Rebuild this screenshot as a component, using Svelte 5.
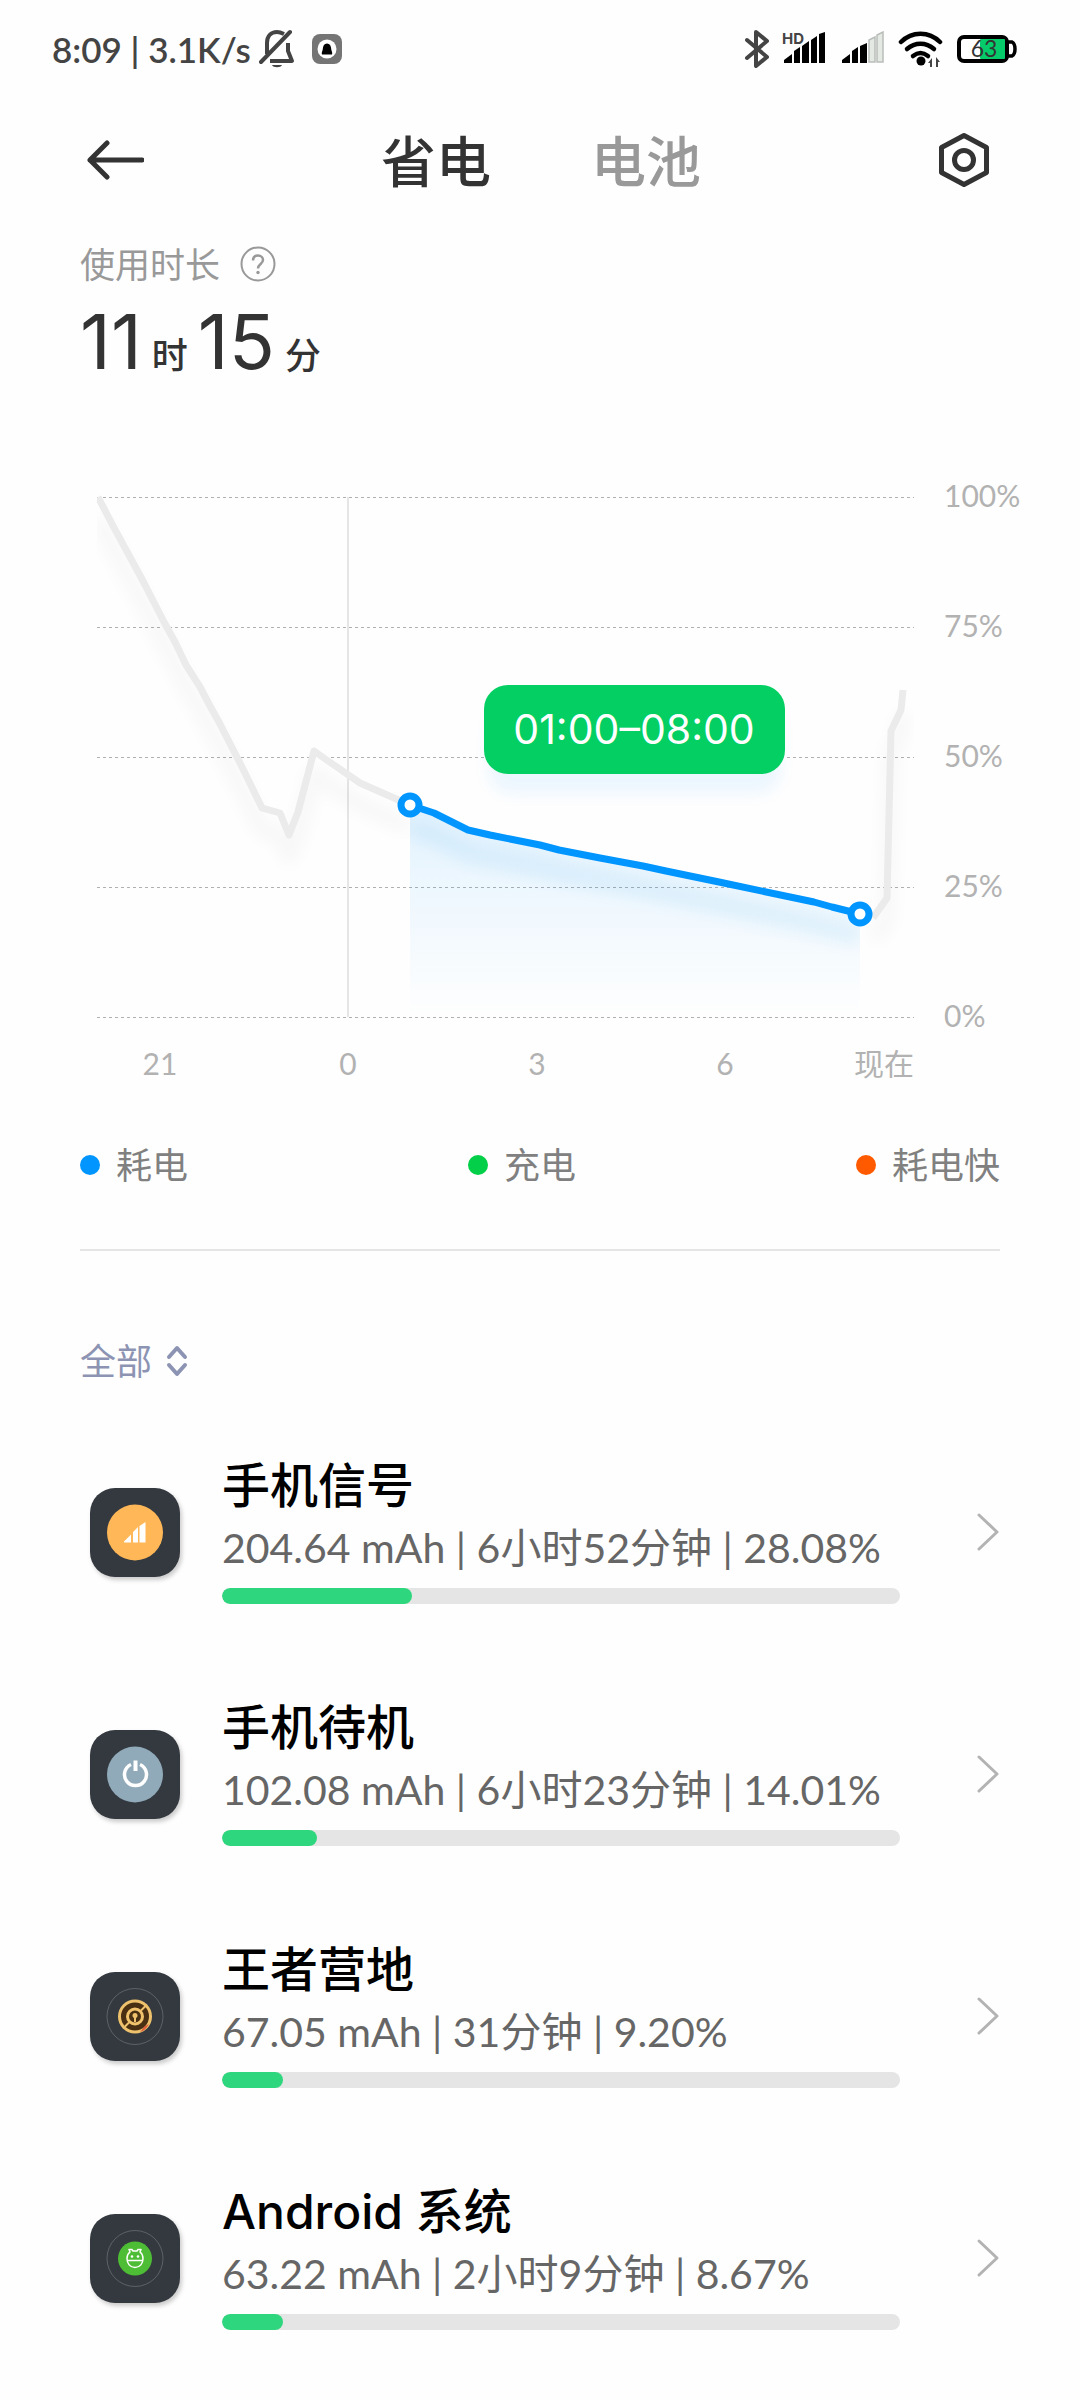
<script lang="ts">
	type Point = [number, number];

	interface App {
		name: string;
		icon: 'signal' | 'power' | 'camp' | 'android';
		mah: string;
		time: string;
		percent: number;
	}

	const tabs = ['省电', '电池'];
	let active = $state(0);

	const legend = [
		{ label: '耗电', kind: 'drain' },
		{ label: '充电', kind: 'charge' },
		{ label: '耗电快', kind: 'fast' }
	];

	const apps: App[] = [
		{ name: '手机信号', icon: 'signal', mah: '204.64', time: '6小时52分钟', percent: 28.08 },
		{ name: '手机待机', icon: 'power', mah: '102.08', time: '6小时23分钟', percent: 14.01 },
		{ name: '王者营地', icon: 'camp', mah: '67.05', time: '31分钟', percent: 9.2 },
		{ name: 'Android 系统', icon: 'android', mah: '63.22', time: '2小时9分钟', percent: 8.67 }
	];

	// chart space: 0% sits at y 577, each quarter is 130 high
	const levels = [100, 75, 50, 25, 0].map((value) => ({ value, y: 577 - value * 5.2 }));

	const hours = [
		{ label: '21', x: 160 },
		{ label: '0', x: 348 },
		{ label: '3', x: 537 },
		{ label: '6', x: 725 },
		{ label: '现在', x: 884 }
	];

	const before: Point[] = [
		[98, 57], [112, 84], [143, 141], [164, 182], [175, 202], [186, 225], [200, 247],
		[210, 266], [220, 284], [243, 329], [262, 368], [280, 373], [289, 395], [298, 372],
		[314, 311], [331, 323], [360, 343], [410, 365]
	];
	const selected: Point[] = [
		[410, 365], [434, 373], [468, 390], [490, 395], [540, 405], [559, 410], [600, 418],
		[643, 426], [666, 431], [719, 442], [814, 462], [832, 467], [860, 474]
	];
	const after: Point[] = [[873, 478], [887, 458], [891, 291], [901, 270], [903, 250]];

	const line = (points: Point[]) => points.map((p) => p.join(',')).join(' ');
	const area = `410,577 ${line(selected)} 860,577`;
</script>

<div class="page">
	<div class="status">
		<div class="status-side">
			<span>8:09 | 3.1K/s</span>
			<svg class="bell" width="36" height="40" viewBox="0 0 36 40" fill="none" stroke="#444" stroke-width="4">
				<path d="M8 25V14C8 7 12 3 18 3c3 0 5 1 7 2M29 14v8l4 10H11" stroke-linejoin="round" />
				<path d="M2 33 31 3" stroke-linecap="round" />
				<path d="M13 36h10c-1 3-9 3-10 0z" fill="#444" stroke="none" />
			</svg>
			<svg width="30" height="30" viewBox="0 0 30 30">
				<rect width="30" height="30" rx="8" fill="#757575" />
				<circle cx="15" cy="15" r="9.5" fill="#fff" />
				<path d="M10 20.500c-.8-2 .5-3 .7-5 .3-4 1.500-6 4.300-6s4 2 4.300 6c.2 2 1.500 3 .7 5z" fill="#000" />
			</svg>
		</div>
		<div class="status-side icons">
			<svg width="26" height="40" viewBox="0 0 26 40" fill="none" stroke="#444" stroke-width="4" stroke-linecap="round" stroke-linejoin="round">
				<path d="M3 11l20 17-11 9V3l11 9L3 29" />
			</svg>
			<svg width="46" height="44" viewBox="0 -4 46 44">
				<path d="M2 32v-3l8-6v9zM12 32V20l6-4v16zM20 32V15l7-5v22zM29 32V9l6-4v27zM37 32V3l6-2v31z" fill="#000" />
				<text x="0" y="13" class="hd">HD</text>
			</svg>
			<svg width="46" height="36" viewBox="0 0 46 36">
				<path d="M2 32v-3l8-6v9zM12 32V20l6-4v16zM20 32V15l7-3v20z" fill="#000" />
				<path d="M29 31V9l6-3v25zM37 31V4l6-3v30z" fill="#e4e9e4" stroke="#b9bdb9" stroke-width="1.500" />
			</svg>
			<svg width="46" height="38" viewBox="0 0 46 38">
				<g fill="none" stroke="#000" stroke-width="4.500" stroke-linecap="round">
					<path d="M3 12c11-11 28-11 39 0" />
					<path d="M9 19c8-7 19-7 27 0" />
					<path d="M15 26c5-4 10-4 15 0" />
				</g>
				<circle cx="23" cy="31" r="4.500" fill="#000" />
				<path d="M34 37V28l-4 5h2v4zM38 37V27l4 5h-2v5z" fill="#444" />
			</svg>
			<svg class="battery" width="62" height="32" viewBox="0 0 62 32">
				<path d="M51 9h5c2 1 3 3 3 7s-1 6-3 7h-5z" fill="#fff" stroke="#000" stroke-width="3.500" />
				<rect x="3" y="4" width="48" height="24" rx="5" fill="#fff" stroke="#000" stroke-width="4" />
				<rect x="24" y="6" width="25" height="20" rx="1" fill="#06cb6a" />
				<text x="28" y="24" text-anchor="middle" class="level">63</text>
			</svg>
		</div>
	</div>

	<header>
		<button class="icon-button" aria-label="返回">
			<svg width="60" height="42" viewBox="-2 0 60 42" fill="none" stroke="#333" stroke-width="5" stroke-linecap="round" stroke-linejoin="round">
				<path d="M56 21H4L21 4M4 21l17 17" />
			</svg>
		</button>
		<nav>
			{#each tabs as tab, i}
				<button class="tab" class:active={i === active} onclick={() => (active = i)}>{tab}</button>
			{/each}
		</nav>
		<button class="icon-button" aria-label="设置">
			<svg width="52" height="56" viewBox="0 0 52 56" fill="none" stroke="#333" stroke-width="5" stroke-linejoin="round">
				<path d="M26 3.500 48.500 15.500v25L26 52.500 3.500 40.500v-25z" />
				<circle cx="26" cy="28" r="9.500" />
			</svg>
		</button>
	</header>

	<main>
		<section class="summary">
			<div class="summary-label">
				<span>使用时长</span>
				<button class="help" aria-label="说明">
					<svg width="36" height="36" viewBox="0 0 36 36" fill="none" stroke="#999" stroke-width="2">
						<circle cx="18" cy="18" r="16.500" />
						<path d="M13 14.500c0-3.500 2-5 5-5s5 2 5 4.500c0 4-5 4-5 8.500" stroke-width="2.500" />
						<circle cx="18" cy="26.500" r="1.700" fill="#999" stroke="none" />
					</svg>
				</button>
			</div>
			<p class="duration"><b>11</b><span>时</span><b>15</b><span>分</span></p>
		</section>

		<svg class="chart" viewBox="0 0 1080 660" role="img" aria-label="电量曲线">
			<defs>
				<linearGradient id="fade" x1="0" y1="365" x2="0" y2="577" gradientUnits="userSpaceOnUse">
					<stop offset="0" stop-color="#0095ff" stop-opacity="0.11" />
					<stop offset="1" stop-color="#0095ff" stop-opacity="0" />
				</linearGradient>
				<filter id="soft" x="-10%" y="-20%" width="120%" height="150%">
					<feGaussianBlur stdDeviation="8" />
				</filter>
				<clipPath id="plot"><rect x="97" y="40" width="817" height="537" /></clipPath>
				<clipPath id="range"><polygon points={area} /></clipPath>
			</defs>

			{#each levels as level}
				<line class="grid" x1="97" x2="914" y1={level.y + 0.5} y2={level.y + 0.5} />
				<text class="axis" x="944" y={level.y + 10}>{level.value}%</text>
			{/each}
			<line class="midnight" x1="348" x2="348" y1="57" y2="577" />
			{#each hours as hour}
				<text class="axis" x={hour.x} y="635" text-anchor="middle">{hour.label}</text>
			{/each}

			<g clip-path="url(#plot)">
				<g class="shade" filter="url(#soft)">
					<polyline points={line(before)} />
					<polyline points={line(after)} />
				</g>
				<polyline class="idle" points={line(before)} />
				<polyline class="idle" points={line(after)} />
			</g>

			<polygon points={area} fill="url(#fade)" />
			<g clip-path="url(#range)">
				<polyline class="glow" points={line(selected)} filter="url(#soft)" />
			</g>
			<polyline class="drain" points={line(selected)} />
			<circle class="knob" cx="410" cy="365" r="9" />
			<circle class="knob" cx="860" cy="474" r="9" />

			<rect class="tip-shade" x="488" y="268" width="293" height="86" rx="24" filter="url(#soft)" />
			<rect class="tip" x="484" y="245" width="301" height="89" rx="24" />
			<text class="tip-text" x="634" y="304" text-anchor="middle">01:00–08:00</text>
		</svg>

		<ul class="legend">
			{#each legend as item}
				<li><i class={item.kind}></i>{item.label}</li>
			{/each}
		</ul>

		<label class="filter">
			<select aria-label="筛选">
				<option>全部</option>
			</select>
			<svg width="24" height="32" viewBox="0 0 24 32" fill="none" stroke="#8d94b3" stroke-width="4" stroke-linecap="round" stroke-linejoin="round">
				<path d="M4 12l8-9 8 9M4 20l8 9 8-9" />
			</svg>
		</label>

		<ul class="apps">
			{#each apps as app}
				<li>
					<a href="#{app.icon}">
						<svg class="app-icon" width="90" height="89" viewBox="0 0 90 89">
							<rect width="90" height="89" rx="25" fill="#33393f" />
							{#if app.icon === 'signal'}
								<circle cx="45" cy="44.500" r="28" fill="#ffb757" />
								<path d="M34 54.500v-1l7-7v8zM43 54.500V44l5-5v15.500zM49.500 54.500V38l6-4v20.500z" fill="#fff" />
							{:else if app.icon === 'power'}
								<circle cx="45" cy="44.500" r="28" fill="#90aaba" />
								<path d="M41 34.500a11 11 0 1 0 9 0" fill="none" stroke="#fff" stroke-width="3.500" />
								<path d="M43.500 30.500h4V41h-4z" fill="#fff" />
							{:else}
								<circle cx="45" cy="44.500" r="28" fill="none" stroke="#858a8d" stroke-width="0.500" />
							{/if}
							{#if app.icon === 'camp'}
								<circle cx="45" cy="44.500" r="15.500" fill="#4a3013" stroke="#eec16c" stroke-width="3" />
								<circle cx="45" cy="44.500" r="7.500" fill="none" stroke="#f1c36c" stroke-width="3" />
								<circle cx="45" cy="43.500" r="2.500" fill="#eec16c" />
								<path d="M45 44v6M51 38.500l6-6M39 50.500l-6 6" stroke="#eec16c" stroke-width="2" />
								<path d="M50 60c4-1 7-4 9-8l-4 2z" fill="#e0603d" />
							{:else if app.icon === 'android'}
								<circle cx="45" cy="44.500" r="17" fill="#4dbd35" />
								<path d="M37 44.500c0-3 1-5 3-6.500l-1-2.500h3l1 1.500h4l1-1.500h3l-1 2.500c2 1.500 3 3.500 3 6.500 0 5-3 9-8 9s-8-4-8-9zM37 46.500h16" fill="none" stroke="#fff" stroke-width="1.500" stroke-linejoin="round" />
								<circle cx="42" cy="42.500" r="1.300" fill="#fff" />
								<circle cx="48" cy="42.500" r="1.300" fill="#fff" />
							{/if}
						</svg>
						<div class="info">
							<h2>{app.name}</h2>
							<p>{app.mah} mAh | {app.time} | {app.percent.toFixed(2)}%</p>
							<div class="bar">
								<div class="fill" style="width: {Math.round(app.percent)}%"></div>
							</div>
						</div>
						<svg width="24" height="42" viewBox="0 0 24 42" fill="none" stroke="#b3b3b3" stroke-width="3" stroke-linecap="round" stroke-linejoin="round">
							<path d="M3 4l18 17L3 38" />
						</svg>
					</a>
				</li>
			{/each}
		</ul>
	</main>
</div>

<style>
	:global(body) {
		margin: 0;
		background: #fefefe;
	}

	.page {
		font-family: Lato, 'Noto Sans CJK SC', sans-serif;
		color: #333;
	}

	button,
	select {
		padding: 0;
		border: 0;
		background: none;
		font: inherit;
		color: inherit;
		cursor: pointer;
	}

	ul,
	p,
	h2 {
		margin: 0;
		padding: 0;
		list-style: none;
	}

	svg {
		display: block;
		flex: none;
	}

	.status {
		display: flex;
		justify-content: space-between;
		align-items: center;
		height: 98px;
		padding: 0 62px 0 52px;
		font-size: 35px;
		font-weight: 600;
		color: #444;
	}

	.status-side {
		display: flex;
		align-items: center;
		gap: 17px;
	}

	.bell {
		margin-left: -9px;
	}

	.icons {
		gap: 12px;
	}

	.hd {
		font: 700 15px Inter, sans-serif;
		fill: #444;
	}

	.level {
		font: 400 23px Lato, sans-serif;
		fill: #333;
	}

	header {
		display: flex;
		justify-content: space-between;
		align-items: center;
		height: 124px;
		padding: 0 90px 0 84px;
	}

	nav {
		display: flex;
		gap: 100px;
		padding-top: 2px;
	}

	.tab {
		font-size: 55px;
		line-height: 80px;
		font-weight: 500;
		color: #999;
	}

	.tab.active {
		color: #333;
	}

	.summary {
		padding: 20px 80px 0;
	}

	.summary-label {
		display: flex;
		align-items: center;
		gap: 20px;
		font-size: 35px;
		line-height: 44px;
		color: #999;
	}

	.duration {
		display: flex;
		align-items: baseline;
		gap: 10px;
		height: 154px;
		line-height: 110px;
	}

	.duration b {
		font: 400 76px/110px Inter, sans-serif;
	}

	.duration span {
		font-size: 36px;
		font-weight: 500;
	}

	.chart {
		width: 100%;
	}

	.grid {
		stroke: #b0b0b0;
		stroke-dasharray: 3 3;
	}

	.midnight {
		stroke: #ccc;
	}

	.axis {
		font-size: 30px;
		fill: #b2b2b2;
	}

	polyline {
		fill: none;
		stroke-width: 7;
		stroke-linejoin: round;
	}

	.idle {
		stroke: #ebebeb;
	}

	.shade {
		stroke: #000;
		opacity: 0.025;
		transform: translateY(22px);
	}

	.shade polyline {
		stroke-width: 18;
	}

	.glow {
		stroke: #0a8fdc;
		stroke-width: 20;
		opacity: 0.08;
		transform: translateY(22px);
	}

	.drain {
		stroke: #0095ff;
	}

	.knob {
		fill: #fff;
		stroke: #0095ff;
		stroke-width: 7;
	}

	.tip-shade {
		fill: #0095ff;
		opacity: 0.07;
	}

	.tip {
		fill: #03cf62;
	}

	.tip-text {
		font: 400 41px Inter, sans-serif;
		fill: #fff;
	}

	.legend {
		display: flex;
		justify-content: space-between;
		margin: 0 80px;
		padding: 39px 0 58px;
		border-bottom: 2px solid #e5e5e5;
		font-size: 36px;
		line-height: 52px;
		color: #808080;
	}

	.legend li {
		display: flex;
		align-items: center;
		gap: 16px;
	}

	.legend i {
		width: 20px;
		height: 20px;
		border-radius: 50%;
	}

	.legend .drain {
		background: #0095ff;
	}

	.legend .charge {
		background: #03cf48;
	}

	.legend .fast {
		background: #ff5a00;
	}

	.filter {
		display: flex;
		align-items: center;
		gap: 12px;
		width: fit-content;
		margin: 84px 80px 24px;
		font-size: 36px;
		line-height: 52px;
		color: #8d94b3;
	}

	select {
		appearance: none;
	}

	.apps a {
		display: flex;
		align-items: center;
		height: 242px;
		box-sizing: border-box;
		padding: 0 80px 0 90px;
		color: #666;
		text-decoration: none;
	}

	.app-icon {
		filter: drop-shadow(2px 3px 2px rgb(0 0 0 / 20%));
	}

	.info {
		flex: 1;
		margin: 0 76px 0 42px;
		padding-bottom: 6px;
	}

	.info h2 {
		font-family: Inter, 'Noto Sans CJK SC', sans-serif;
		font-size: 48px;
		line-height: 64px;
		font-weight: 500;
		color: #000;
	}

	.info p {
		font-size: 41px;
		line-height: 60px;
		white-space: nowrap;
	}

	.bar {
		height: 16px;
		margin-top: 10px;
		border-radius: 8px;
		background: #e5e5e5;
		overflow: hidden;
	}

	.fill {
		height: 100%;
		border-radius: 8px;
		background: #2ed67d;
	}
</style>
